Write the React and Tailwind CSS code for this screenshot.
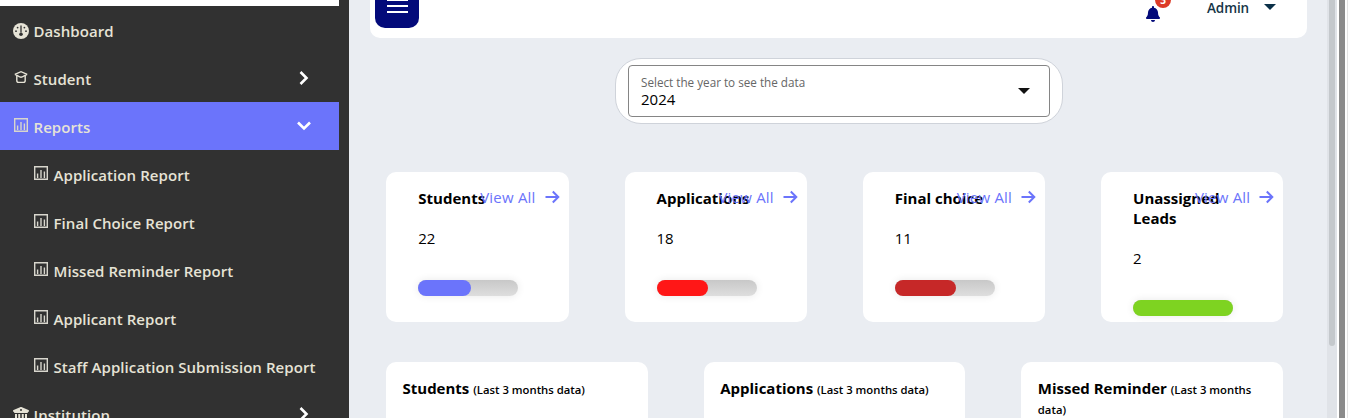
import { FaBell } from "react-icons/fa";
import { FaBuildingColumns } from "react-icons/fa6";

function GaugeIcon() {
  return (
    <svg viewBox="0 0 16 16" className="h-4 w-4">
      <circle cx="8" cy="8" r="8" fill="#e6e3d6" />
      <path d="M8 2.500v7" stroke="#313131" strokeWidth="1.3" />
      <circle cx="8" cy="11.2" r="1.8" fill="#313131" />
      <g fill="#313131">
        <circle cx="4.6" cy="4.6" r="0.9" />
        <circle cx="11.4" cy="4.6" r="0.9" />
        <circle cx="3" cy="8.2" r="0.9" />
        <circle cx="13" cy="8.2" r="0.9" />
      </g>
    </svg>
  );
}

function StudentIcon() {
  return (
    <svg viewBox="0 0 14 14" className="h-3.5 w-3.5" fill="none" stroke="#e6e3d6" strokeWidth="1.4">
      <path d="M.8 4.300 7 1.700 13.200 4.300M.8 4.300 3 5.300C4.500 6.600 5.500 7.200 7 7.200S9.500 6.600 11 5.300L13.200 4.300M2.800 5v5.500Q2.800 12.400 4.700 12.400H9.300Q11.200 12.400 11.200 10.500V5" />
    </svg>
  );
}

function ReportIcon() {
  return (
    <svg viewBox="0 0 14 14" className="h-3.5 w-3.5" fill="none" stroke="#d8d6cd">
      <path d="M.7.7h12.600v12.600H.7z" strokeWidth="1.4" />
      <path d="M3.600 7.500v4.500M7 4v8M10.400 5.500v6.500" strokeWidth="1.400" />
    </svg>
  );
}

function Label({ children, className = "" }) {
  return (
    <span className={`whitespace-nowrap pt-0.5 text-[15px] leading-6 font-semibold tracking-[0.07px] text-[#e6e3d6] ${className}`}>
      {children}
    </span>
  );
}

function NavRow({ icon, iconClass, label, active, arrow }) {
  return (
    <div className={`flex h-12 w-[339px] shrink-0 items-center ${active ? "bg-[#6b74fb]" : ""}`}>
      <span className={`flex w-[33.5px] shrink-0 ${iconClass}`}>{icon}</span>
      <Label className="w-[265px]">{label}</Label>
      {arrow === "right" && (
        <svg viewBox="0 0 10 14" className="h-3.5 w-2.5" fill="none" stroke="#fff" strokeWidth="2.6">
          <path d="m1.500 1 6 6-6 6" />
        </svg>
      )}
      {arrow === "down" && (
        <svg viewBox="0 0 14 10" className="-ml-0.5 h-2.5 w-3.5" fill="none" stroke="#fff" strokeWidth="2.6">
          <path d="m1 1.500 6 6 6-6" />
        </svg>
      )}
    </div>
  );
}

const reports = [
  "Application Report",
  "Final Choice Report",
  "Missed Reminder Report",
  "Applicant Report",
  "Staff Application Submission Report",
];

function Sidebar() {
  return (
    <aside className="flex h-full w-[349px] shrink-0 flex-col overflow-hidden bg-[#313131]">
      <div className="h-1.5 w-[339px] shrink-0 bg-white" />
      <NavRow icon={<GaugeIcon />} iconClass="pl-[13px] pt-0.5" label="Dashboard" />
      <NavRow icon={<StudentIcon />} iconClass="pl-3.5 pb-0.5" label="Student" arrow="right" />
      <NavRow icon={<ReportIcon />} iconClass="pl-3.5 pb-0.5" label="Reports" active arrow="down" />
      {reports.map((name) => (
        <div key={name} className="flex h-12 shrink-0 items-center pl-[34px]">
          <span className="w-[19.5px] shrink-0 pb-0.5">
            <ReportIcon />
          </span>
          <Label>{name}</Label>
        </div>
      ))}
      <NavRow
        icon={<FaBuildingColumns className="h-4 w-4 text-[#e6e3d6]" />}
        iconClass="pl-[13px] pt-0.5"
        label="Institution"
        arrow="right"
      />
    </aside>
  );
}

const stats = [
  { title: "Students", value: 22, fill: "w-[53px] bg-[#6b74fb]" },
  { title: "Applications", value: 18, fill: "w-[51px] bg-[#ff1717]" },
  { title: "Final choice", value: 11, fill: "w-[61px] bg-[#c62828]" },
  { title: "Unassigned Leads", value: 2, fill: "w-[100px] bg-[#7ed321]" },
];

function StatCard({ title, value, fill }) {
  return (
    <div className="relative h-[150px] rounded-[10px] bg-white px-8 pt-4">
      <h3 className="w-[100px] text-[15px] leading-5 font-bold">{title}</h3>
      <p className="mt-5 text-[15px] leading-5">{value}</p>
      <div className="mt-8 h-4 w-[100px] rounded-full bg-linear-to-b from-[#c8c8c8] to-[#dedede] shadow-[0_0_8px_rgba(0,0,0,0.09)]">
        <div className={`h-4 rounded-full ${fill}`} />
      </div>
      <a className="absolute top-[13px] right-[9px] flex items-center gap-2 text-[15px] leading-6 tracking-[0.2px] whitespace-nowrap text-[#6b74fb]">
        View All
        <svg viewBox="0 0 16 14" className="h-3.5 w-4" fill="none" stroke="currentColor" strokeWidth="2">
          <path d="M1.500 7h12.500M8.800 1.500 14.300 7l-5.500 5.500" />
        </svg>
      </a>
    </div>
  );
}

export default function App() {
  return (
    <div className="flex h-[418px] w-[1348px] overflow-hidden bg-[#eaedf2] font-['Open_Sans','Noto_Sans',sans-serif] text-black">
      <Sidebar />
      <main className="flex h-full w-[978px] shrink-0 flex-col overflow-hidden pl-[21px]">
        <header className="flex h-[38px] w-[937px] shrink-0 items-start rounded-b-[10px] bg-white pl-[5px]">
          <div className="flex h-7 w-11 flex-col items-center justify-end gap-1 overflow-hidden rounded-b-[10px] bg-[#030a7a] pb-[15px]">
            <i className="h-0.5 w-[21px] shrink-0 bg-white" />
            <i className="h-0.5 w-[21px] shrink-0 bg-white" />
            <i className="h-0.5 w-[21px] shrink-0 bg-white" />
          </div>
          <div className="relative ml-[727px] pt-1.5">
            <FaBell className="h-4 w-3.5 text-[#030a7a]" />
            <span className="absolute -top-2 left-[9px] flex h-4 w-4 items-center justify-center rounded-full bg-[#dc3b28] text-[10px] font-bold text-white">
              3
            </span>
          </div>
          <span className="ml-[47px] text-[13.5px] leading-4 font-semibold tracking-[-0.1px] text-[#163547]">Admin</span>
          <svg viewBox="0 0 12 6" className="mt-1 ml-[15px] h-1.5 w-3" fill="#0b3048">
            <path d="M0 0h12L6 6z" />
          </svg>
        </header>
        <div className="mt-5 ml-[245px] h-[66px] w-[448px] shrink-0 rounded-[26px] border border-[#cfd3da] bg-white px-3 py-1.5">
          <div className="flex h-[52px] w-[422px] items-center justify-between rounded-[4px] border border-[#858585] pr-[19px] pl-3">
            <div className="flex flex-col">
              <span className="text-[11.7px] leading-4 font-medium text-[#666]">Select the year to see the data</span>
              <span className="text-[15px] leading-[18px]">2024</span>
            </div>
            <svg viewBox="0 0 12 6" className="h-1.5 w-3" fill="#111">
              <path d="M0 0h12L6 6z" />
            </svg>
          </div>
        </div>
        <section className="mt-12 ml-[16.3px] grid w-[897px] shrink-0 grid-cols-4 gap-14">
          {stats.map((s) => (
            <StatCard key={s.title} {...s} />
          ))}
        </section>
        <section className="mt-10 ml-4 grid w-[897px] shrink-0 grid-cols-3 gap-14">
          {["Students", "Applications", "Missed Reminder"].map((t) => (
            <div key={t} className="h-40 rounded-[10px] bg-white px-[16.5px] pt-4 text-[15px] leading-5">
              <b className="font-bold">{t}</b>{" "}
              <span className="text-[11.3px] leading-none font-semibold">(Last 3 months data)</span>
            </div>
          ))}
        </section>
      </main>
      <div className="h-full w-2.5 shrink-0 bg-[#e0e3e8] pl-0.5">
        <div className="h-[346px] w-1.5 rounded-b-full bg-[#c4c8cc]" />
      </div>
      <div className="flex h-full w-[11px] shrink-0 justify-between bg-white pl-0.5">
        <div className="h-full w-1.5 bg-[#8b8b8b]" />
        <div className="h-full w-px bg-[#e4e4e4]" />
      </div>
    </div>
  );
}
